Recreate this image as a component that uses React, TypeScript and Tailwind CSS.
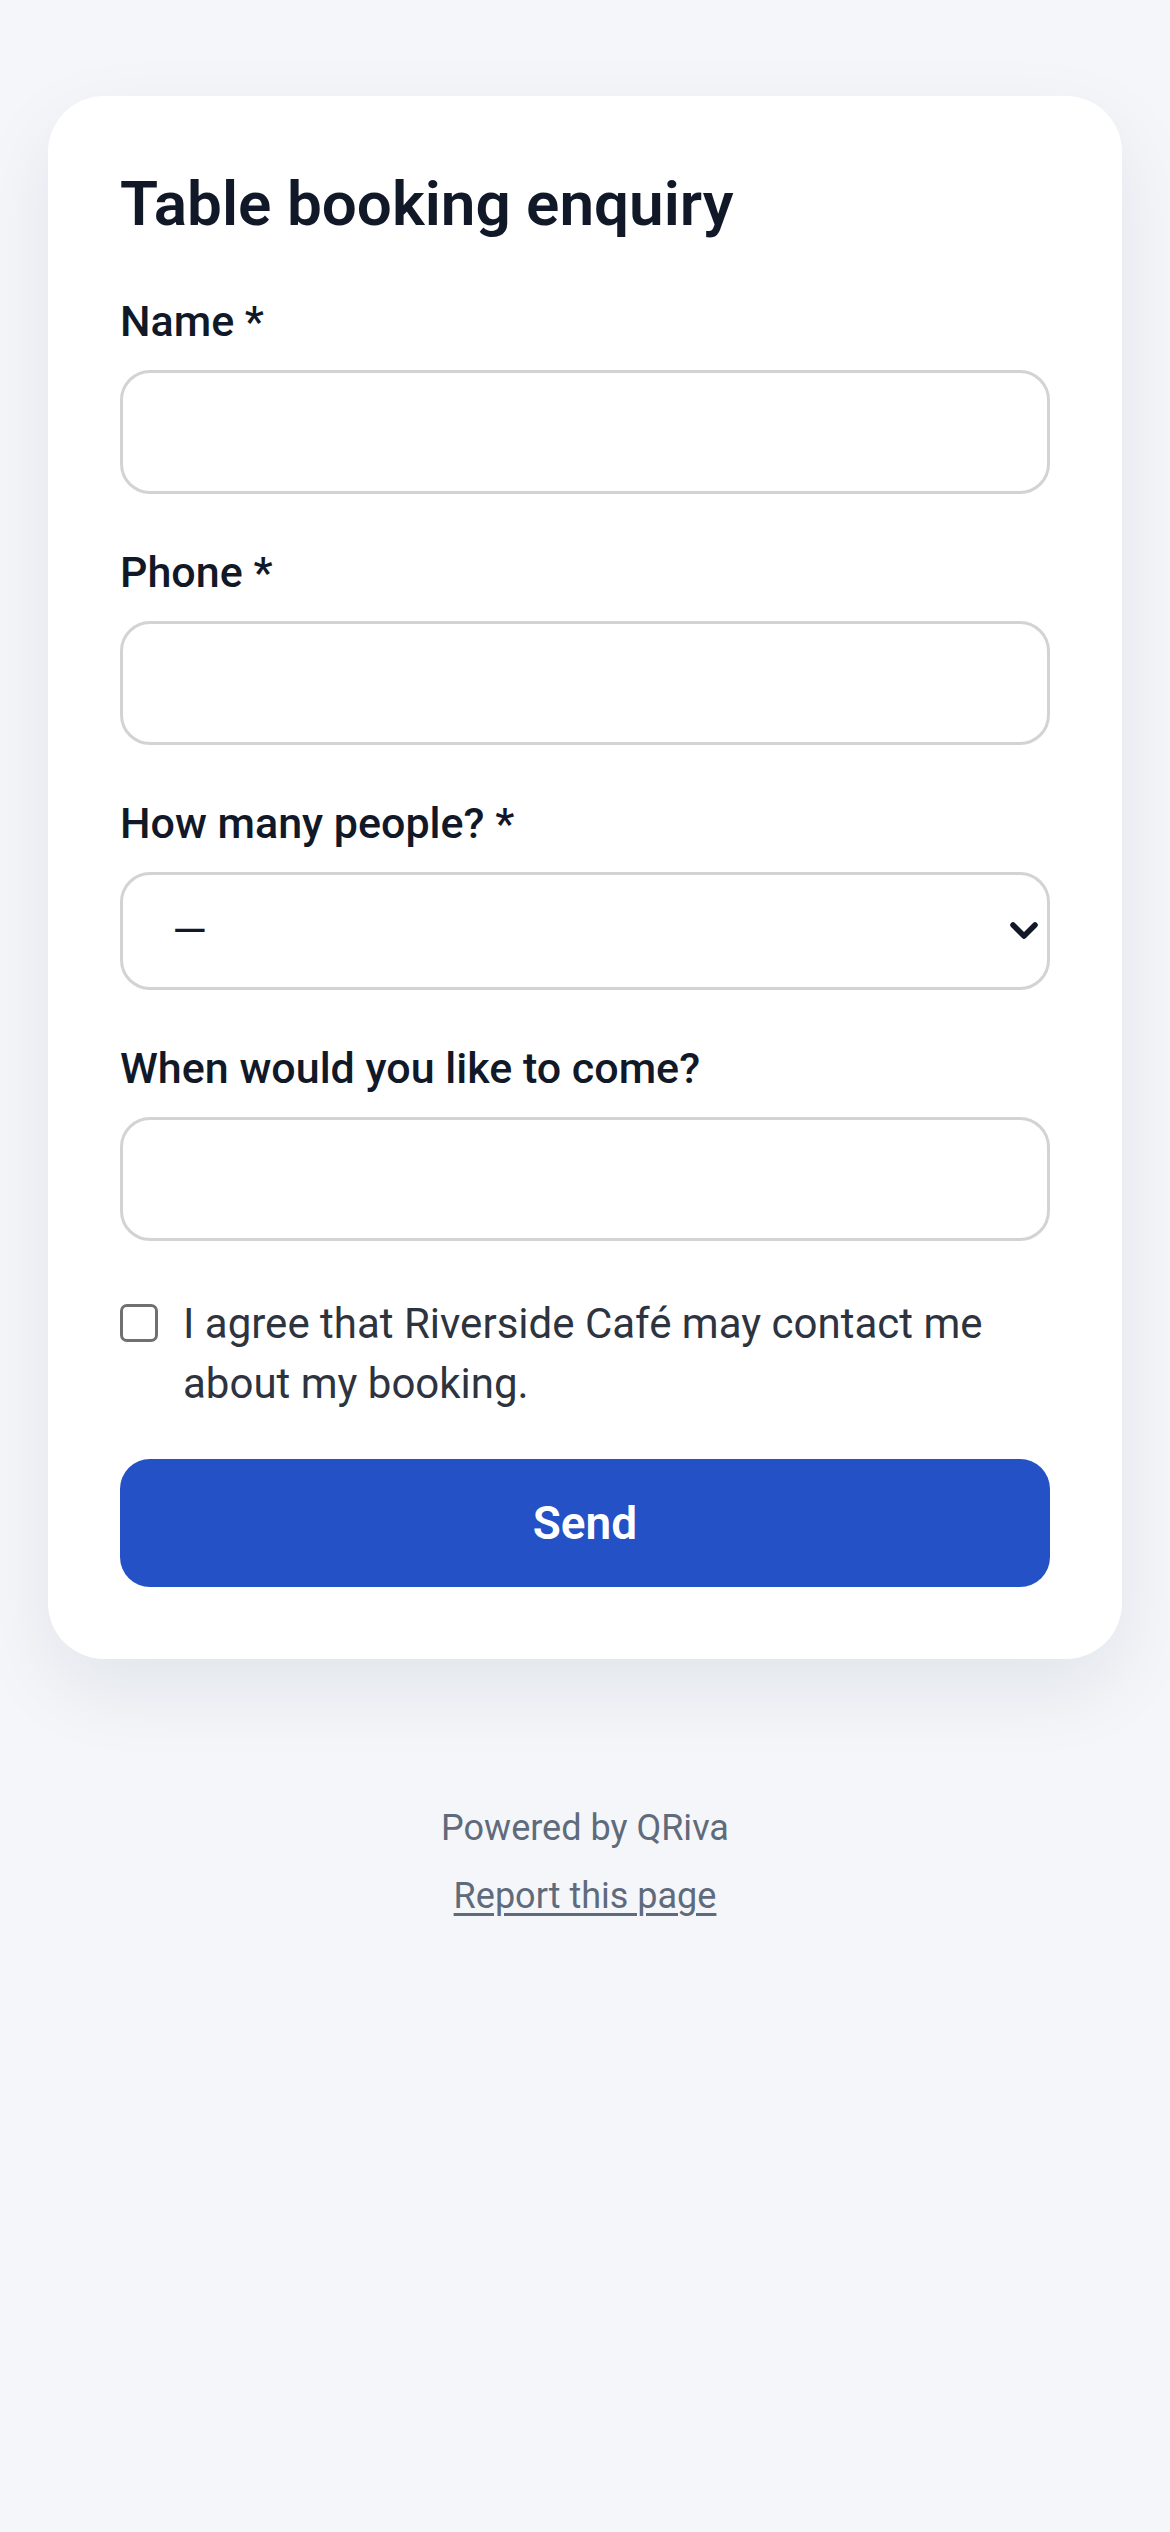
import { useState } from 'react';

const font = { fontFamily: 'Roboto, "Noto Sans", "Liberation Sans", sans-serif' };

function Field({ label, children }: { label: string; children: React.ReactNode }) {
  return (
    <div className="flex flex-col">
      <label className="text-[43px] font-medium leading-[60px] text-[#111827]">{label}</label>
      <div className="mt-[19px]">{children}</div>
    </div>
  );
}

export default function App() {
  const [agree, setAgree] = useState(false);

  return (
    <div className="min-h-[2532px] bg-[#f4f6fa] px-[48px] pt-[96px]" style={font}>
      <form
        className="flex flex-col rounded-[56px] bg-white p-[72px] shadow-[0_30px_80px_rgba(17,24,39,0.08)]"
        onSubmit={(event) => event.preventDefault()}
      >
        <h1 className="text-[62px] font-semibold leading-[72px] text-[#111827]">Table booking enquiry</h1>

        <div className="mt-[51px] flex flex-col gap-[48px]">
          <Field label="Name *">
            <input
              type="text"
              className="block h-[124px] w-full rounded-[30px] border-[3px] border-[#d3d3d3] bg-white px-[42px] text-[45px] outline-none"
            />
          </Field>
          <Field label="Phone *">
            <input
              type="tel"
              className="block h-[124px] w-full rounded-[30px] border-[3px] border-[#d3d3d3] bg-white px-[42px] text-[45px] outline-none"
            />
          </Field>
          <Field label="How many people? *">
            <div className="relative">
              <select className="block h-[118px] w-full appearance-none rounded-[30px] border-[3px] border-[#d3d3d3] bg-white pl-[49px] text-[45px] text-[#111827] outline-none">
                <option>—</option>
                <option>1</option>
                <option>2</option>
                <option>3</option>
                <option>4</option>
                <option>5</option>
                <option>6+</option>
              </select>
              <svg
                className="pointer-events-none absolute right-[12px] top-1/2 h-[18px] w-[28px] -translate-y-1/2"
                viewBox="0 0 28 18"
                fill="none"
              >
                <path d="M3 3l11 11 11-11" stroke="#111827" strokeWidth="5.5" strokeLinecap="round" strokeLinejoin="round" />
              </svg>
            </div>
          </Field>
          <Field label="When would you like to come?">
            <input
              type="text"
              className="block h-[124px] w-full rounded-[30px] border-[3px] border-[#d3d3d3] bg-white px-[42px] text-[45px] outline-none"
            />
          </Field>
        </div>

        <label className="mt-[53px] flex items-start gap-[25px]">
          <input
            type="checkbox"
            checked={agree}
            onChange={(event) => setAgree(event.target.checked)}
            className="mt-[10px] h-[38px] w-[38px] shrink-0 appearance-none rounded-[7px] border-[3px] border-[#707070] bg-white checked:bg-[#2451c6]"
          />
          <span className="text-[42px] leading-[60px] text-[#2d3440]">
            I agree that Riverside Café may contact me about my booking.
          </span>
        </label>

        <button
          type="submit"
          className="mt-[45px] h-[128px] w-full rounded-[30px] bg-[#2451c6] text-[46px] font-semibold text-white"
        >
          Send
        </button>
      </form>

      <footer className="mt-[142px] flex flex-col items-center gap-[14px] text-[36px] leading-[54px] text-[#5f6b7b]">
        <p>Powered by QRiva</p>
        <a href="#" className="underline decoration-[3px] underline-offset-[5px]">
          Report this page
        </a>
      </footer>
    </div>
  );
}
